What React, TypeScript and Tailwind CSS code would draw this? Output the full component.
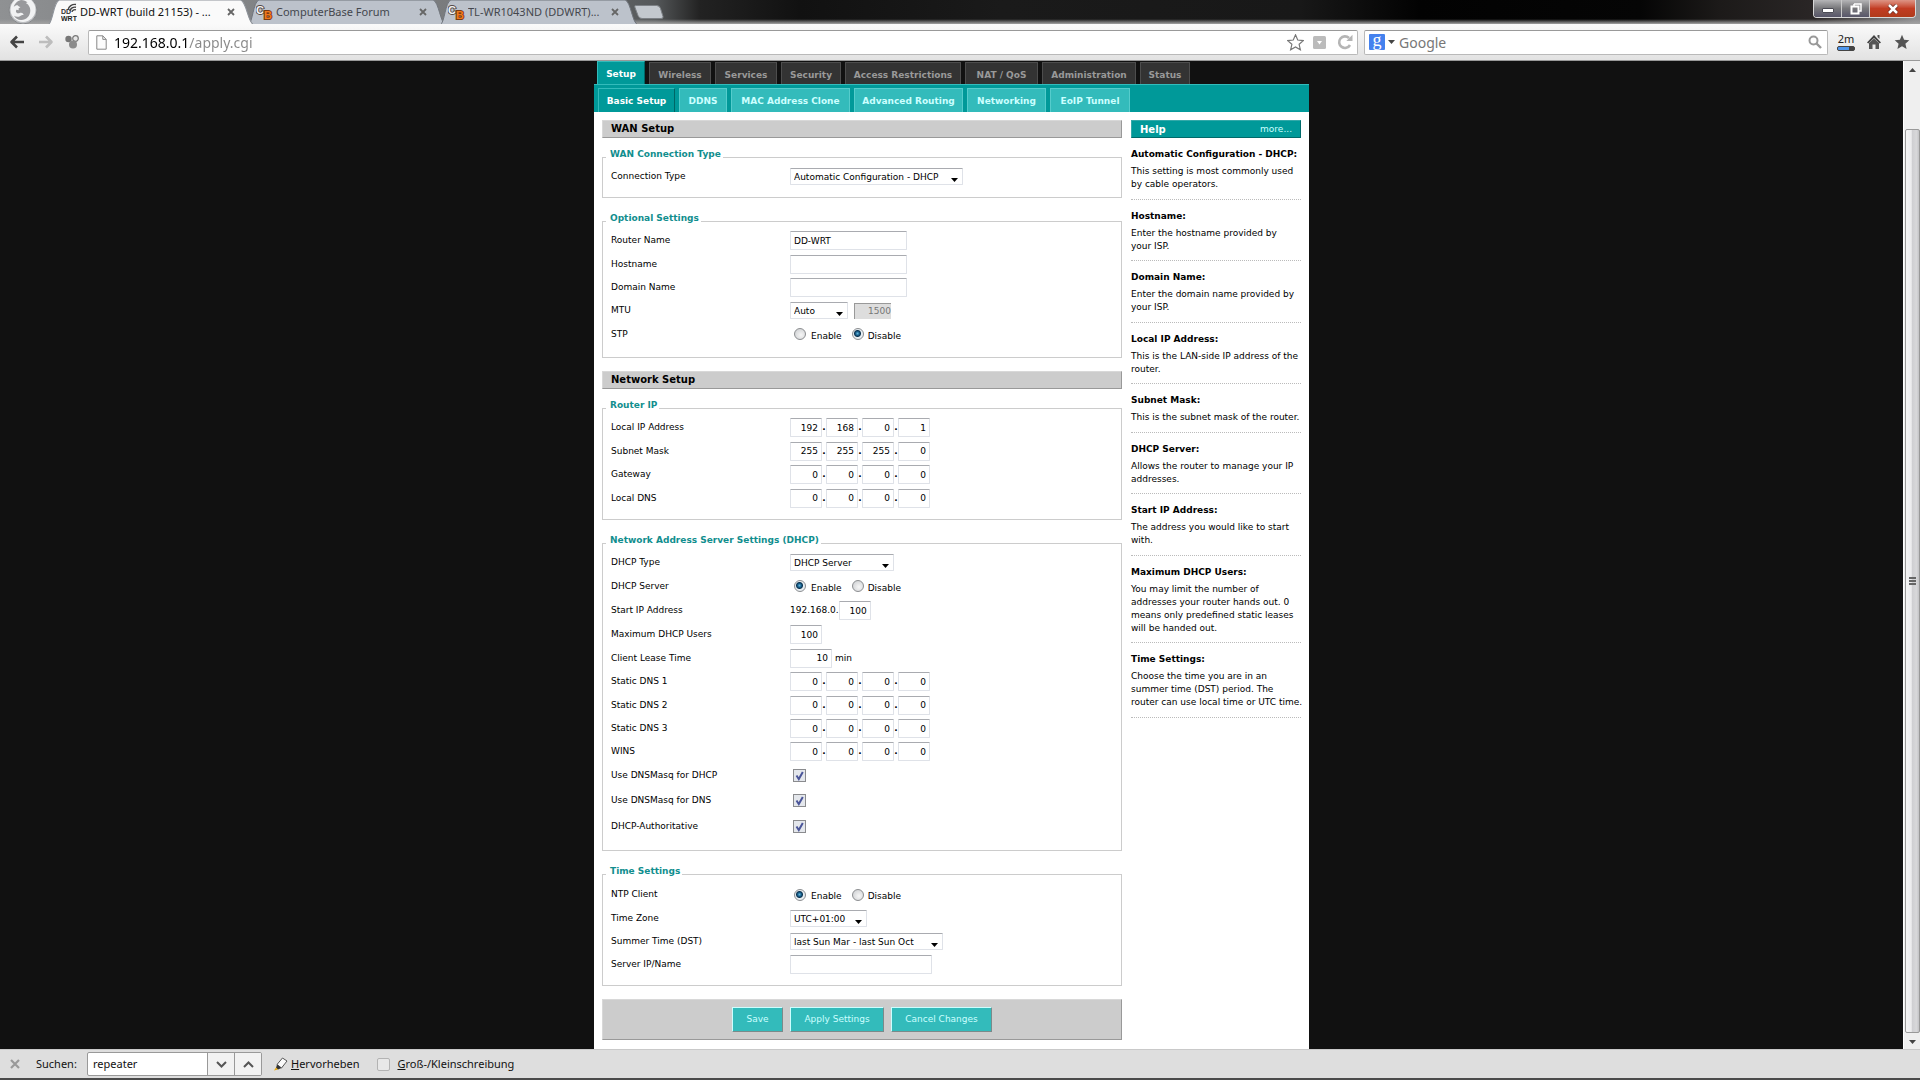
import React, { useState } from "react";

/* ---------- browser chrome ---------- */

function FirefoxMark() {
  return (
    <svg viewBox="0 0 30 24" className="h-6 w-[30px]" aria-hidden="true">
      <circle cx="15" cy="10" r="14" fill="#b9bbbe" stroke="#85878a" strokeWidth="1" />
      <circle cx="15" cy="9.500" r="12.500" fill="#f1f2f3" />
      <path
        d="M13 0c3 .2 5 1 6.500 2.500-.8 0-1.400.2-1.800.6 2.300 1.200 4.600 3.500 4.600 7.400 0 5.500-4 9.500-9 9.500-3.500 0-6-1.800-7.300-4.300 2 1.400 4.600 1.400 6.300.2 1.300-.9 2-1.100 2.600-1 .6 0 .8-.5.4-1-.8-1-2.200-1.400-3.600-.9-1.200.4-2.300.4-3.300-.6-.6-.7-.6-1.700-.1-2.500.4-.3 1.500 0 2.300.3.100-.7.100-1.300-.1-1.800.8-.5 1.600-1 2-1.500-1.500-.2-2.400-.8-2.800-1.600-1.700-.1-3 .5-3.900 1.700C6.500 4 9 .8 13 0z"
        fill="#98999c"
      />
    </svg>
  );
}

function DdwrtIcon() {
  return (
    <svg viewBox="0 0 16 18" className="h-[18px] w-4" aria-hidden="true">
      <text x="0" y="11" fontSize="7" fontWeight="700" fontFamily="Liberation Sans, sans-serif" fill="#333">DD</text>
      <text x="0" y="17.500" fontSize="7" fontWeight="700" fontFamily="Liberation Sans, sans-serif" fill="#222">WRT</text>
      <path d="M7 7a7 6.500 0 0 1 8-5.500M9 8a5 4.500 0 0 1 6-3.800M11 9a3 2.500 0 0 1 4-2.200" fill="none" stroke="#444" strokeWidth="1.400" />
    </svg>
  );
}

function ComputerBaseIcon() {
  return (
    <svg viewBox="0 0 17 18" className="h-[18px] w-[17px]" aria-hidden="true">
      <text x="0" y="11" fontSize="11" fontWeight="700" fontFamily="Liberation Sans, sans-serif" fill="#f4f4f4" stroke="#554b48" strokeWidth="2" paintOrder="stroke">C</text>
      <text x="8" y="16" fontSize="11" fontWeight="700" fontFamily="Liberation Sans, sans-serif" fill="#f07a1c" stroke="#7a3a12" strokeWidth="2" paintOrder="stroke">B</text>
    </svg>
  );
}

function BrowserTab({ title, active, width, children }: { title: string; active?: boolean; width: string; children: React.ReactNode }) {
  return (
    <div className={`relative -mr-[6px] flex h-6 items-center pr-[19px] ${width} ${active ? "z-10 pl-[13px]" : "pl-2"}`}>
      <svg viewBox="0 0 200 24" preserveAspectRatio="none" className="absolute inset-0 h-full w-full" aria-hidden="true">
        <path
          d="M0 25 C5 23 5 2 11 0 H187 C193 2 194 23 200 25"
          fill={active ? "#fafafa" : "#bcc2cb"}
          stroke={active ? "#8d9299" : "#70757c"}
          strokeWidth="1"
        />
      </svg>
      <span className="relative flex min-w-0 flex-1 items-center gap-[3px]">
        {children}
        <span className={`truncate text-[11px] ${active ? "text-[#111]" : "text-[#44474d]"}`}>{title}</span>
      </span>
      <button type="button" aria-label="Close tab" className="relative">
        <svg viewBox="0 0 8 8" className="h-2 w-2" aria-hidden="true">
          <path d="M1 1l6 6M7 1L1 7" stroke="#666" strokeWidth="1.800" />
        </svg>
      </button>
    </div>
  );
}

function TabStrip() {
  return (
    <div className="relative flex h-6 shrink-0 items-stretch overflow-hidden bg-[linear-gradient(to_right,#8f9193_0px,#8a8c8e_50px,#77797b_500px,#55585a_655px,#222_700px,#111_800px,#1a1a1a_1000px,#181818_1300px,#020202_1420px,#050505_1640px,#1c1a19_1720px,#2a2626_1815px,#8e8e90_1915px)]">
      <div className="pointer-events-none absolute inset-x-0 bottom-0 h-[5px] bg-gradient-to-b from-transparent to-[#a3a3a3]" />
      <button type="button" aria-label="Firefox" className="relative ml-2 w-10">
        <FirefoxMark />
      </button>
      <BrowserTab title="DD-WRT (build 21153) - ..." active width="w-[206px]">
        <DdwrtIcon />
      </BrowserTab>
      <BrowserTab title="ComputerBase Forum" width="w-[198px]">
        <ComputerBaseIcon />
      </BrowserTab>
      <BrowserTab title="TL-WR1043ND (DDWRT)..." width="w-[198px]">
        <ComputerBaseIcon />
      </BrowserTab>
      <button type="button" aria-label="New tab" className="relative ml-[2px] self-center">
        <svg viewBox="0 0 32 14" className="h-[14px] w-8" aria-hidden="true">
          <path d="M1.500.5h21q3 0 4 3l2.500 8q.5 2-2 2H8q-3 0-4-3L.8 2Q.5.5 1.500.5z" fill="#c3c8ce" stroke="#7c8085" />
        </svg>
      </button>
      <div className="relative mr-1 ml-auto flex h-[18px] overflow-hidden rounded-b border border-t-0 border-[#d8d8d8]">
        <button type="button" aria-label="Minimize" className="flex w-7 items-center justify-center border-r border-[#c9c9c9] bg-gradient-to-b from-[#b5b5b7] via-[#77777a] to-[#58566a]">
          <span className="mt-1 h-[5px] w-3 rounded-[1px] border border-[#4c4c55] bg-white" />
        </button>
        <button type="button" aria-label="Restore" className="flex w-7 items-center justify-center border-r border-[#c9c9c9] bg-gradient-to-b from-[#b5b5b7] via-[#77777a] to-[#58566a]">
          <svg viewBox="0 0 12 12" className="h-3 w-3" aria-hidden="true">
            <path d="M4 1h7v7h-2M4 1v2" fill="none" stroke="#fff" strokeWidth="1.500" />
            <rect x="1.500" y="3.500" width="7" height="7" fill="none" stroke="#fff" strokeWidth="2" />
          </svg>
        </button>
        <button type="button" aria-label="Close window" className="flex w-[45px] items-center justify-center bg-gradient-to-b from-[#dd9485] via-[#c23c22] to-[#b03a1a]">
          <svg viewBox="0 0 12 10" className="h-[10px] w-3" aria-hidden="true">
            <path d="M2 1l8 8M10 1L2 9" stroke="#6a2a20" strokeWidth="4" />
            <path d="M2 1l8 8M10 1L2 9" stroke="#fff" strokeWidth="2.500" />
          </svg>
        </button>
      </div>
    </div>
  );
}

function ArrowIcon({ color, flip }: { color: string; flip?: boolean }) {
  return (
    <svg viewBox="0 0 16 14" className={`h-[14px] w-4 ${flip ? "rotate-180" : ""}`} aria-hidden="true">
      <path d="M15 7H2.500M8 1.500L2.500 7 8 12.500" fill="none" stroke={color} strokeWidth="2.600" strokeLinejoin="round" />
    </svg>
  );
}

const STAR = "M8 .8l2.100 4.900 5.200.5-3.900 3.500 1.200 5.200L8 12.200l-4.600 2.700 1.200-5.200L.7 6.200l5.200-.5z";

function Toolbar() {
  return (
    <div className="flex h-[37px] shrink-0 items-center border-b border-[#999] bg-gradient-to-b from-[#fafafa] to-[#e2e2e2]">
      <button type="button" aria-label="Back" className="ml-[9px]"><ArrowIcon color="#444" /></button>
      <button type="button" aria-label="Forward" className="ml-[13px]"><ArrowIcon color="#bdbdbd" flip /></button>
      <button type="button" aria-label="Extensions" className="ml-[11px]">
        <svg viewBox="0 0 14 14" className="h-[14px] w-[14px]" aria-hidden="true">
          <circle cx="3.500" cy="4" r="3.200" fill="#777" />
          <circle cx="10.500" cy="3.500" r="2.800" fill="#e6e6e6" stroke="#777" strokeWidth="1.200" />
          <circle cx="8" cy="9.500" r="4" fill="#8b8b8b" />
        </svg>
      </button>
      <div className="ml-[9px] flex h-[25px] min-w-0 flex-1 items-center rounded-[2px] border border-[#b9b9b9] border-t-[#999] bg-white">
        <svg viewBox="0 0 11 15" className="ml-[7px] h-[15px] w-[11px]" aria-hidden="true">
          <path d="M.8.8h6l3.400 3.600v9.800H.8z" fill="#fcfcfc" stroke="#888" />
          <path d="M6.800.8v3.600h3.400" fill="none" stroke="#888" />
        </svg>
        <input
          aria-label="Address"
          defaultValue="192.168.0.1/apply.cgi"
          className="ml-[7px] h-5 min-w-0 flex-1 bg-[linear-gradient(to_right,#000_75px,#888_75px)] bg-clip-text text-[14px] text-transparent caret-black outline-none"
        />
        <button type="button" aria-label="Bookmark">
          <svg viewBox="0 0 16 16" className="h-[17px] w-[17px]" aria-hidden="true"><path d={STAR} fill="#fff" stroke="#777" strokeWidth="1.100" /></svg>
        </button>
        <button type="button" aria-label="Downloads" className="ml-[9px]">
          <svg viewBox="0 0 13 13" className="h-[13px] w-[13px]" aria-hidden="true">
            <rect width="13" height="13" rx="1.500" fill="#bbb" />
            <path d="M4 5h5L6.500 8.500z" fill="#fff" />
          </svg>
        </button>
        <button type="button" aria-label="Reload" className="mr-1 ml-[11px]">
          <svg viewBox="0 0 16 16" className="h-4 w-4" aria-hidden="true">
            <path d="M13 11A5.800 5.800 0 1 1 12 4" fill="none" stroke="#b5b5b5" strokeWidth="2.600" />
            <path d="M15.500.8V7H9.300z" fill="#b5b5b5" />
          </svg>
        </button>
      </div>
      <div className="ml-[6px] flex h-[25px] w-[464px] items-center rounded-[2px] border border-[#b9b9b9] border-t-[#999] bg-white">
        <button type="button" aria-label="Search engine" className="ml-1 flex items-center gap-[3px]">
          <span className="flex h-4 w-4 items-center justify-center rounded-[1px] bg-[#4481ee] pb-1 font-['Liberation_Serif',serif] text-[18px] leading-none text-white">g</span>
          <svg viewBox="0 0 7 4" className="h-1 w-[7px]" aria-hidden="true"><path d="M0 0h7L3.500 4z" fill="#444" /></svg>
        </button>
        <input aria-label="Search" placeholder="Google" className="ml-1 h-5 min-w-0 flex-1 text-[14px] outline-none placeholder:text-[#777]" />
        <button type="button" aria-label="Start search" className="mr-[5px]">
          <svg viewBox="0 0 14 14" className="h-[14px] w-[14px]" aria-hidden="true">
            <circle cx="5.500" cy="5.500" r="4" fill="none" stroke="#999" strokeWidth="2" />
            <path d="M8.500 8.500l4.500 4.500" stroke="#999" strokeWidth="2.400" />
          </svg>
        </button>
      </div>
      <button type="button" className="ml-2 flex w-5 flex-col items-center text-[11px] leading-[12px] text-[#222]">
        2m
        <span className="mt-px flex h-[5px] w-[18px] overflow-hidden rounded-[2px] border border-[#444] bg-[#444]">
          <span className="w-[11px] bg-[#4d96ee]" />
        </span>
      </button>
      <button type="button" aria-label="Home" className="ml-[10px]">
        <svg viewBox="0 0 16 16" className="h-4 w-4" aria-hidden="true">
          <path d="M8 1l7 7.500-1.300 1L8 4 2.300 9.500 1 8.500z" fill="#444" />
          <path d="M3 9l5-4.500L13 9v6H9.500v-4.500h-3V15H3zM11.500 1h2v4l-2-2z" fill="#555" />
        </svg>
      </button>
      <button type="button" aria-label="Bookmarks" className="mr-[10px] ml-3">
        <svg viewBox="0 0 16 16" className="h-4 w-4" aria-hidden="true"><path d={STAR} fill="#555" /></svg>
      </button>
    </div>
  );
}

function Scrollbar() {
  return (
    <div className="flex w-[17px] shrink-0 flex-col items-center border-l border-white bg-[#efefef]" aria-hidden="true">
      <svg viewBox="0 0 7 4" className="mt-[7px] h-1 w-[7px]"><path d="M0 4h7L3.500 0z" fill="#444" /></svg>
      <div className="mt-[57px] flex w-[15px] flex-1 flex-col items-center justify-center gap-px rounded-[2px] border border-[#999] bg-[linear-gradient(to_right,#f5f5f5,#ececee_40%,#cfcfd2_50%,#d8d8da_80%,#c3c3c6)]">
        <span className="h-[2px] w-[7px] bg-[#666]" />
        <span className="h-[2px] w-[7px] bg-[#666]" />
        <span className="h-[2px] w-[7px] bg-[#666]" />
      </div>
      <svg viewBox="0 0 7 4" className="mt-[7px] mb-[5px] h-1 w-[7px]"><path d="M0 0h7L3.500 4z" fill="#444" /></svg>
    </div>
  );
}

function FindBar() {
  return (
    <div className="flex h-[31px] shrink-0 items-center border-t border-b-2 border-t-[#c9c9c9] border-b-[#4a4a4a] bg-[#dedede] text-[11px] text-[#111]">
      <button type="button" aria-label="Close find bar" className="ml-[10px]">
        <svg viewBox="0 0 10 10" className="h-[10px] w-[10px]" aria-hidden="true"><path d="M1 1l8 8M9 1L1 9" stroke="#999" strokeWidth="2.200" /></svg>
      </button>
      <label htmlFor="find" className="ml-4 w-[51px]">Suchen:</label>
      <div className="flex h-6 items-stretch overflow-hidden rounded-[2px] border border-[#999] bg-white">
        <input id="find" defaultValue="repeater" className="w-[119px] pl-[5px] text-[11px] outline-none" />
        <button type="button" aria-label="Next match" className="flex w-[27px] items-center justify-center border-l border-[#999] bg-[#f2f2f2]">
          <svg viewBox="0 0 11 7" className="h-[7px] w-[11px]" aria-hidden="true"><path d="M1 1l4.500 4.500L10 1" fill="none" stroke="#555" strokeWidth="2" /></svg>
        </button>
        <button type="button" aria-label="Previous match" className="flex w-[27px] items-center justify-center border-l border-[#999] bg-[#f2f2f2]">
          <svg viewBox="0 0 11 7" className="h-[7px] w-[11px]" aria-hidden="true"><path d="M1 6l4.500-4.500L10 6" fill="none" stroke="#555" strokeWidth="2" /></svg>
        </button>
      </div>
      <button type="button" className="ml-3 flex items-center gap-[3px]">
        <svg viewBox="0 0 14 14" className="h-[14px] w-[14px]" aria-hidden="true">
          <path d="M3 7.500L8.500 1l4.500 3L7.500 11z" fill="#fafafa" stroke="#555" />
          <path d="M3 7.500L7.500 11 4 12.500 2 11z" fill="#333" />
          <path d="M0 13.500l2-3 2 2z" fill="#e8a80c" />
        </svg>
        <span><u>H</u>ervorheben</span>
      </button>
      <label className="ml-[18px] flex items-center gap-[7px]">
        <input type="checkbox" className="h-[13px] w-[13px] appearance-none rounded-[2px] border border-[#b3b3b3] bg-[#e8e8e8]" />
        <span><u>G</u>roß-/Kleinschreibung</span>
      </label>
    </div>
  );
}

/* ---------- router form ---------- */

const FIELD = "h-[19px] rounded-[1px] border border-[#dfe2e8] border-t-[#a9abb0] bg-white text-[9px] outline-none";

function SectionHeader({ children }: { children: React.ReactNode }) {
  return (
    <h2 className="h-[18px] border border-[#d8d8d8] border-r-[#999] border-b-[#999] bg-[#ccc] pl-2 text-[10px] leading-4 font-bold">{children}</h2>
  );
}

function Group({ title, pad, children }: { title: string; pad: string; children: React.ReactNode }) {
  return (
    <fieldset className={`min-w-0 border border-[#ccc] px-2 ${pad}`}>
      <legend className="-ml-[5px] pt-px pr-[2px] pb-[7px] pl-1 leading-[13px] font-bold text-[#118e8e]">{title}</legend>
      <div className="-mt-[3px]">{children}</div>
    </fieldset>
  );
}

function Row({ label, id, h = "h-[23px]", children }: { label: string; id?: string; h?: string; children: React.ReactNode }) {
  return (
    <div className={`flex items-center ${h}`}>
      {id ? <label htmlFor={id} className="w-[179px] shrink-0">{label}</label> : <span className="w-[179px] shrink-0">{label}</span>}
      {children}
    </div>
  );
}

function Select({ id, value, width }: { id: string; value: string; width: string }) {
  return (
    <span className={`relative inline-flex ${width}`}>
      <select id={id} className="h-[17px] w-full appearance-none rounded-[1px] border border-[#dfe2e8] border-t-[#a9abb0] bg-white pt-px pl-[3px] text-[9px] outline-none">
        <option>{value}</option>
      </select>
      <svg viewBox="0 0 7 4" className="pointer-events-none absolute right-[5px] bottom-[3px] h-1 w-[7px]" aria-hidden="true"><path d="M0 0h7L3.500 4z" fill="#000" /></svg>
    </span>
  );
}

function Octets({ label, values, h }: { label: string; values: number[]; h?: string }) {
  return (
    <Row label={label} h={h}>
      <div className="flex items-center" role="group" aria-label={label}>
        {values.map((v, i) => (
          <React.Fragment key={i}>
            {i > 0 && <span className="w-1 text-center font-bold">.</span>}
            <input aria-label={`${label} ${i + 1}`} defaultValue={v} className={`${FIELD} w-8 pr-[3px] text-right`} />
          </React.Fragment>
        ))}
      </div>
    </Row>
  );
}

function OnOff({ name, initial }: { name: string; initial: boolean }) {
  const [on, setOn] = useState(initial);
  const radio =
    "h-3 w-3 appearance-none rounded-full border border-[#8b8d90] bg-[radial-gradient(circle_at_60%_60%,#f6f6f6,#c9cbce)] checked:bg-[radial-gradient(circle_at_45%_45%,#62b6dc_0px,#155a86_2px,#0c3350_3px,#e8eef2_4px)]";
  return (
    <div className="ml-1 flex gap-[10px]">
      <label className="flex items-center gap-[5px]">
        <input type="radio" name={name} checked={on} onChange={() => setOn(true)} className={radio} />
        <span className="mt-1">Enable</span>
      </label>
      <label className="flex items-center gap-1">
        <input type="radio" name={name} checked={!on} onChange={() => setOn(false)} className={radio} />
        <span className="mt-1">Disable</span>
      </label>
    </div>
  );
}

function Check({ id }: { id: string }) {
  const [on, setOn] = useState(true);
  return (
    <span className="relative ml-[3px] flex h-[13px] w-[13px]">
      <input id={id} type="checkbox" checked={on} onChange={(e) => setOn(e.target.checked)} className="h-full w-full appearance-none border border-[#8a8b8e] bg-[#e4e7ec]" />
      {on && (
        <svg viewBox="0 0 13 13" className="pointer-events-none absolute inset-0" aria-hidden="true">
          <path d="M3.500 6.500l2.300 3.500L9.800 3" fill="none" stroke="#4a5599" strokeWidth="2" />
        </svg>
      )}
    </span>
  );
}

const HELP: [string, string][] = [
  ["Automatic Configuration - DHCP:", "This setting is most commonly used\nby cable operators."],
  ["Hostname:", "Enter the hostname provided by\nyour ISP."],
  ["Domain Name:", "Enter the domain name provided by\nyour ISP."],
  ["Local IP Address:", "This is the LAN-side IP address of the\nrouter."],
  ["Subnet Mask:", "This is the subnet mask of the router."],
  ["DHCP Server:", "Allows the router to manage your IP\naddresses."],
  ["Start IP Address:", "The address you would like to start\nwith."],
  ["Maximum DHCP Users:", "You may limit the number of\naddresses your router hands out. 0\nmeans only predefined static leases\nwill be handed out."],
  ["Time Settings:", "Choose the time you are in an\nsummer time (DST) period. The\nrouter can use local time or UTC time."],
];

function Help() {
  return (
    <aside className="w-[170px] shrink-0">
      <div className="flex h-[18px] items-center justify-between border border-[#33a9a9] border-r-[#006a6a] border-b-[#006a6a] bg-[#099] px-2 text-[#cff]">
        <h2 className="text-[10px] font-bold text-white">Help</h2>
        <a href="#help" className="text-[#cff]">more...</a>
      </div>
      <dl>
        {HELP.map(([term, text]) => (
          <div key={term} className="border-b border-dotted border-[#bbb] pt-[10px] leading-[13px] whitespace-pre odd:pb-2 even:pb-[7px]">
            <dt className="mb-1 font-bold">{term}</dt>
            <dd>{text}</dd>
          </div>
        ))}
      </dl>
    </aside>
  );
}

const MAIN_TABS: [string, string][] = [
  ["Wireless", "w-[62px]"],
  ["Services", "w-[62px]"],
  ["Security", "w-[60px]"],
  ["Access Restrictions", "w-[116px]"],
  ["NAT / QoS", "w-[73px]"],
  ["Administration", "w-[94px]"],
  ["Status", "w-[50px]"],
];
const SUB_TABS: [string, string][] = [
  ["DDNS", "w-[48px]"],
  ["MAC Address Clone", "w-[119px]"],
  ["Advanced Routing", "w-[109px]"],
  ["Networking", "w-[79px]"],
  ["EoIP Tunnel", "w-[80px]"],
];

function Navigation() {
  return (
    <nav className="bg-[#111] text-center font-bold whitespace-nowrap">
      <div className="flex h-[23px] items-end gap-1 pl-[3px]">
        <a href="#setup" className="h-full w-12 border border-b-0 border-[#3bb] border-r-[#066] bg-[#099] leading-[24px] text-white">Setup</a>
        {MAIN_TABS.map(([t, w]) => (
          <a key={t} href="#tab" className={`h-[22px] border border-b-0 border-[#4d4d4d] bg-[#333] leading-[24px] text-[#999] ${w}`}>{t}</a>
        ))}
      </div>
      <div className="flex h-7 items-end gap-1 border-t border-[#3bb] bg-[#099] pl-1">
        <a href="#basic" className="h-6 w-[77px] border border-b-0 border-[#3bb] border-r-[#066] bg-[#099] leading-[24px] text-white">Basic Setup</a>
        {SUB_TABS.map(([t, w]) => (
          <a key={t} href="#sub" className={`h-6 border border-b-0 border-[#5cc] bg-[#3bb] leading-[24px] text-[#cff] ${w}`}>{t}</a>
        ))}
      </div>
    </nav>
  );
}

const ACTION = "h-[25px] border border-[#cff] border-r-[#7a8a8a] border-b-[#7a8a8a] bg-[#3bb] text-[#cff]";

function Settings() {
  return (
    <form className="min-w-0 flex-1" onSubmit={(e) => e.preventDefault()}>
      <SectionHeader>WAN Setup</SectionHeader>
      <div className="mt-[9px] flex flex-col gap-[13px]">
        <Group title="WAN Connection Type" pad="pb-[9px]">
          <Row label="Connection Type" id="ctype"><Select id="ctype" value="Automatic Configuration - DHCP" width="w-[173px]" /></Row>
        </Group>
        <Group title="Optional Settings" pad="pb-[11px]">
          <Row label="Router Name" id="rname"><input id="rname" defaultValue="DD-WRT" className={`${FIELD} w-[117px] pl-[3px]`} /></Row>
          <Row label="Hostname" id="host" h="h-6"><input id="host" className={`${FIELD} w-[117px] pl-[3px]`} /></Row>
          <Row label="Domain Name" id="domain"><input id="domain" className={`${FIELD} w-[117px] pl-[3px]`} /></Row>
          <Row label="MTU" id="mtu">
            <Select id="mtu" value="Auto" width="w-[58px]" />
            <input aria-label="MTU size" disabled defaultValue="1500" className="ml-[6px] h-4 w-[37px] border-t border-l border-[#999] bg-[#ddd] text-right text-[9px] text-[#777]" />
          </Row>
          <Row label="STP" h="h-6"><OnOff name="stp" initial={false} /></Row>
        </Group>
      </div>
      <div className="mt-[13px]"><SectionHeader>Network Setup</SectionHeader></div>
      <div className="mt-[9px] flex flex-col gap-[13px]">
        <Group title="Router IP" pad="pb-[9px]">
          <Octets label="Local IP Address" values={[192, 168, 0, 1]} />
          <Octets label="Subnet Mask" values={[255, 255, 255, 0]} h="h-6" />
          <Octets label="Gateway" values={[0, 0, 0, 0]} />
          <Octets label="Local DNS" values={[0, 0, 0, 0]} h="h-6" />
        </Group>
        <Group title="Network Address Server Settings (DHCP)" pad="pb-[11px]">
          <Row label="DHCP Type" id="dtype"><Select id="dtype" value="DHCP Server" width="w-[104px]" /></Row>
          <Row label="DHCP Server" h="h-6"><OnOff name="dhcp" initial={true} /></Row>
          <Row label="Start IP Address" id="start" h="h-[25px]">
            <span className="whitespace-nowrap">192.168.0.</span>
            <input id="start" defaultValue="100" className={`${FIELD} w-8 pr-[3px] text-right`} />
          </Row>
          <Row label="Maximum DHCP Users" id="max"><input id="max" defaultValue="100" className={`${FIELD} w-8 pr-[3px] text-right`} /></Row>
          <Row label="Client Lease Time" id="lease" h="h-6">
            <input id="lease" defaultValue="10" className={`${FIELD} w-[42px] pr-[3px] text-right`} />
            <span className="ml-[3px]">min</span>
          </Row>
          <Octets label="Static DNS 1" values={[0, 0, 0, 0]} />
          <Octets label="Static DNS 2" values={[0, 0, 0, 0]} h="h-6" />
          <Octets label="Static DNS 3" values={[0, 0, 0, 0]} />
          <Octets label="WINS" values={[0, 0, 0, 0]} />
          <Row label="Use DNSMasq for DHCP" id="mdhcp" h="h-[25px]"><Check id="mdhcp" /></Row>
          <Row label="Use DNSMasq for DNS" id="mdns" h="h-[25px]"><Check id="mdns" /></Row>
          <Row label="DHCP-Authoritative" id="auth" h="h-[26px]"><Check id="auth" /></Row>
        </Group>
        <Group title="Time Settings" pad="pb-[9px]">
          <Row label="NTP Client" h="h-[25px]"><OnOff name="ntp" initial={true} /></Row>
          <Row label="Time Zone" id="tz"><Select id="tz" value="UTC+01:00" width="w-[77px]" /></Row>
          <Row label="Summer Time (DST)" id="dst"><Select id="dst" value="last Sun Mar - last Sun Oct" width="w-[153px]" /></Row>
          <Row label="Server IP/Name" id="ntpserver"><input id="ntpserver" className={`${FIELD} w-[142px] pl-[3px]`} /></Row>
        </Group>
      </div>
      <div className="mt-[13px] flex h-[41px] items-center justify-center gap-[7px] border border-[#d8d8d8] border-r-[#999] border-b-[#999] bg-[#ccc]">
        <button type="submit" className={`${ACTION} w-[51px]`}>Save</button>
        <button type="button" className={`${ACTION} w-[94px]`}>Apply Settings</button>
        <button type="button" className={`${ACTION} w-[101px]`}>Cancel Changes</button>
      </div>
    </form>
  );
}

export default function App() {
  return (
    <div className="flex h-screen flex-col overflow-hidden font-['Noto_Sans',sans-serif]">
      <TabStrip />
      <Toolbar />
      <div className="flex min-h-0 flex-1">
        <main className="flex min-w-0 flex-1 justify-center overflow-hidden bg-[#111]">
          <div className="w-full max-w-[715px] bg-white font-['DejaVu_Sans',Verdana,sans-serif] text-[9px] leading-[13px] text-black">
            <Navigation />
            <div className="flex gap-[9px] px-2 pt-2">
              <Settings />
              <Help />
            </div>
          </div>
        </main>
        <Scrollbar />
      </div>
      <FindBar />
    </div>
  );
}
